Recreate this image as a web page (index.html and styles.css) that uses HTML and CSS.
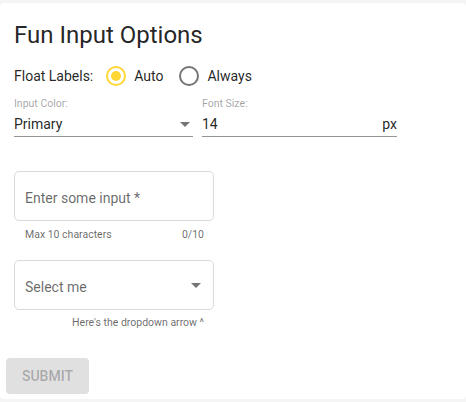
FILE: index.html
```html
<!DOCTYPE html>
<html>
<head>
<meta charset="utf-8">
<link rel="stylesheet" href="styles.css">
</head>
<body>
<div class="card">
  <h1 class="title">Fun Input Options</h1>
  <div class="radio-row">
    <span class="radio-label">Float Labels:</span>
    <span class="radio checked"><span class="dot"></span></span>
    <span class="radio-text">Auto</span>
    <span class="radio"></span>
    <span class="radio-text">Always</span>
  </div>
  <div class="fields">
    <div class="field f1">
      <div class="flabel">Input Color:</div>
      <div class="fvalue"><span>Primary</span><span class="arrow"></span></div>
    </div>
    <div class="field f2">
      <div class="flabel">Font Size:</div>
      <div class="fvalue"><span>14</span><span class="suffix">px</span></div>
    </div>
  </div>
  <div class="outline">Enter some input *</div>
  <div class="hint"><span>Max 10 characters</span><span>0/10</span></div>
  <div class="outline select"><span>Select me</span><span class="arrow"></span></div>
  <div class="hint right">Here's the dropdown arrow ^</div>
  <button class="submit">SUBMIT</button>
</div>
</body>
</html>
```
FILE: styles.css
```css
html, body {
  margin: 0;
  padding: 0;
  background: #f5f5f5;
  font-family: Roboto, "Liberation Sans", sans-serif;
}
body {
  padding-top: 3px;
}
.card {
  background: #fff;
  border-radius: 4px;
  padding: 16px 14px 0 14px;
  height: 396px;
  box-sizing: border-box;
  display: flex;
  flex-direction: column;
  align-items: flex-start;
}
.title {
  margin: 0;
  font-size: 24px;
  line-height: 32px;
  font-weight: 400;
  color: rgba(0,0,0,.87);
}
.radio-row {
  margin-top: 15px;
  display: flex;
  align-items: center;
  height: 20px;
  font-size: 14px;
  line-height: 20px;
  color: rgba(0,0,0,.87);
}
.radio-label {
  margin-right: 13px;
}
.radio {
  width: 20px;
  height: 20px;
  box-sizing: border-box;
  border: 2px solid #757575;
  border-radius: 50%;
  display: flex;
  align-items: center;
  justify-content: center;
}
.radio.checked {
  border-color: #fdd835;
}
.dot {
  width: 10px;
  height: 10px;
  border-radius: 50%;
  background: #fdd835;
}
.radio-text {
  margin-left: 8px;
  margin-right: 16px;
}
.fields {
  margin-top: 12px;
  display: flex;
  gap: 9px;
}
.field.f1 { width: 179px; }
.field.f2 { width: 195px; }
.flabel {
  font-size: 10.5px;
  line-height: 12px;
  color: rgba(0,0,0,.38);
}
.fvalue {
  margin-top: 4px;
  font-size: 14px;
  line-height: 20px;
  padding-bottom: 2px;
  border-bottom: 1px solid #949494;
  color: rgba(0,0,0,.87);
  display: flex;
  justify-content: space-between;
  align-items: center;
}
.arrow {
  width: 0;
  height: 0;
  border-left: 5px solid transparent;
  border-right: 5px solid transparent;
  border-top: 5px solid #757575;
  margin-right: 3px;
}
.outline {
  margin-top: 34px;
  width: 200px;
  height: 50px;
  box-sizing: border-box;
  border: 1px solid #dadada;
  border-radius: 5px;
  padding: 3px 12px 0 10px;
  font-size: 14px;
  line-height: 20px;
  color: rgba(0,0,0,.6);
  display: flex;
  align-items: center;
}
.outline.select {
  margin-top: 19px;
  justify-content: space-between;
}
.outline.select .arrow {
  margin-right: 0;
  margin-top: -2px;
}
.hint {
  margin-top: 8px;
  width: 200px;
  box-sizing: border-box;
  padding: 0 10px 0 11px;
  font-size: 10.5px;
  line-height: 12px;
  color: rgba(0,0,0,.6);
  display: flex;
  justify-content: space-between;
}
.hint.right {
  margin-top: 7px;
  justify-content: flex-end;
}
.submit {
  margin-top: 29px;
  margin-left: -8px;
  width: 83px;
  height: 36px;
  border: none;
  border-radius: 4px;
  background: #e0e0e0;
  color: rgba(0,0,0,.26);
  font-family: Roboto, "Liberation Sans", sans-serif;
  font-size: 14px;
  font-weight: 500;
  padding: 0;
}
```
